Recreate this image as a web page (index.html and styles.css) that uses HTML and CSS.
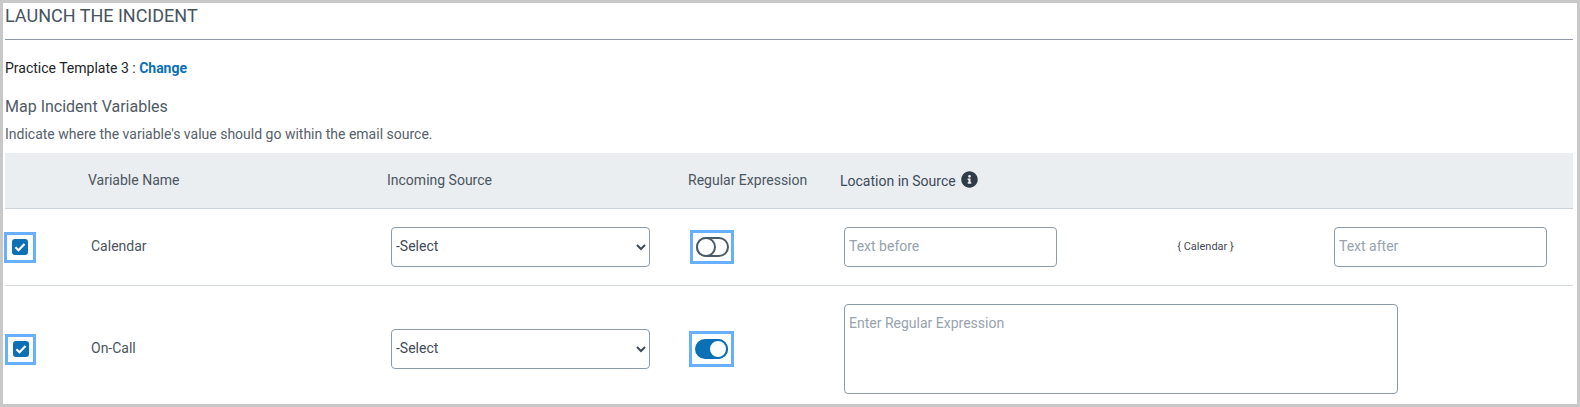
FILE: index.html
```html
<!DOCTYPE html>
<html lang="en">
<head>
<meta charset="utf-8">
<title>Launch the Incident</title>
<link rel="stylesheet" href="styles.css">
</head>
<body>
<main class="frame">
  <h1 class="title">LAUNCH THE INCIDENT</h1>
  <p class="template">Practice Template 3 : <a class="change" href="#">Change</a></p>
  <h2 class="subtitle">Map Incident Variables</h2>
  <p class="hint">Indicate where the variable's value should go within the email source.</p>

  <div class="row head">
    <span class="name">Variable Name</span>
    <span class="source">Incoming Source</span>
    <span class="regex">Regular Expression</span>
    <span class="location">Location in Source
      <svg class="info" viewBox="0 0 512 512" aria-hidden="true"><path d="M256 8C119 8 8 119 8 256s111 248 248 248 248-111 248-248S393 8 256 8zm0 110a42 42 0 1 1 0 84 42 42 0 0 1 0-84zm56 254c0 7-5 12-12 12h-88c-7 0-12-5-12-12v-24c0-7 5-12 12-12h12v-64h-12c-7 0-12-5-12-12v-24c0-7 5-12 12-12h64c7 0 12 5 12 12v100h12c7 0 12 5 12 12z"/></svg>
    </span>
  </div>

  <div class="row first">
    <span class="focus check-focus"><span class="check"><svg viewBox="0 0 16 16"><path d="M3.4 8.2l3.1 3 6-6.2"/></svg></span></span>
    <span class="name cell">Calendar</span>
    <select class="select"><option>-Select</option></select>
    <span class="focus toggle-focus"><span class="toggle"></span></span>
    <input class="field before" placeholder="Text before">
    <span class="token">{ Calendar }</span>
    <input class="field after" placeholder="Text after">
  </div>

  <div class="row second">
    <span class="focus check-focus"><span class="check"><svg viewBox="0 0 16 16"><path d="M3.4 8.2l3.1 3 6-6.2"/></svg></span></span>
    <span class="name cell">On-Call</span>
    <select class="select"><option>-Select</option></select>
    <span class="focus toggle-focus"><span class="toggle on"></span></span>
    <textarea class="field area" placeholder="Enter Regular Expression"></textarea>
  </div>
</main>
</body>
</html>
```
FILE: styles.css
```css
*, *::after { box-sizing: border-box; }
html, body { margin: 0; height: 407px; overflow: hidden; }
body { background: #fff; font-family: Roboto, "Liberation Sans", sans-serif; color: #4a5560; }

.frame {
  width: 1580px;
  height: 407px;
  border: 3px solid #c8c8c8;
  padding: 0 4px 0 2px;
  background: #fff;
}

.title {
  margin: 0;
  height: 37px;
  padding-top: 3px;
  font-size: 18px;
  line-height: 20px;
  font-weight: 400;
  color: #47535f;
  border-bottom: 1px solid #8f99a3;
}

.template {
  margin: 0;
  padding-top: 18px;
  height: 56px;
  font-size: 14px;
  line-height: 20px;
  color: #212529;
}
.change { color: #0b6fb8; font-weight: 700; text-decoration: none; }

.subtitle {
  margin: 0;
  height: 24px;
  font-size: 16px;
  line-height: 22px;
  font-weight: 400;
  color: #4f5b66;
}
.hint {
  margin: 0;
  height: 33px;
  padding-top: 4px;
  font-size: 14px;
  line-height: 20px;
  color: #56616b;
}

.row {
  display: grid;
  align-items: center;
  font-size: 14px;
  color: #4a5560;
}
.head {
  grid-template-columns: 83px 299px 301px 152px 1fr;
  height: 56px;
  background: #ebeef1;
  border-bottom: 1px solid #ced5da;
  padding-bottom: 1px;
}
.head .name { grid-column: 2; }
.head .location { display: flex; align-items: center; gap: 5px; padding-top: 1px; color: #3c4a5c; }
.info { width: 17px; height: 17px; fill: #2f3b47; margin-top: -2px; }

.first, .second {
  grid-template-columns: 86px 300px 298px 153px 219px 273px 1fr;
}
.first { height: 77px; border-bottom: 1px solid #d5dbdf; }
.second { height: 118px; padding-top: 8px; }
.cell { padding-bottom: 2px; }

.focus {
  display: flex;
  align-items: center;
  justify-content: center;
  border: 3px solid #66b0ff;
}
.check-focus { width: 32px; height: 31px; margin-left: -1px; }
.second .check-focus { width: 31px; margin-left: 0; }
.check {
  display: block;
  width: 16px;
  height: 16px;
  border-radius: 3px;
  background: #0b70b5;
}
.check svg { display: block; width: 16px; height: 16px; fill: none; stroke: #fff; stroke-width: 2.2; }

.select {
  width: 259px;
  height: 40px;
  padding: 0 0 2px 0;
  border: 1px solid #8c9ba6;
  border-radius: 4px;
  background: #fff;
  font: 14px Roboto, "Liberation Sans", sans-serif;
  color: #3f4a55;
}

.toggle-focus { width: 44px; height: 34px; margin-left: 1px; }
.second .toggle-focus { width: 45px; height: 36px; margin-left: 0; }
.toggle {
  position: relative;
  display: block;
  width: 33px;
  height: 20px;
  border: 2px solid #4a5a68;
  border-radius: 10px;
  background: #fff;
}
.toggle::after {
  content: "";
  position: absolute;
  left: -2px;
  top: -2px;
  width: 20px;
  height: 20px;
  border: 2px solid #4a5a68;
  border-radius: 50%;
  background: #fff;
}
.toggle.on { background: #0b70b5; border-color: #0b70b5; }
.toggle.on::after { left: 11px; border-color: #0b70b5; }

.field {
  display: block;
  border: 1px solid #8c9ba6;
  border-radius: 4px;
  background: #fff;
  padding: 0 4px 2px;
  font: 14px Roboto, "Liberation Sans", sans-serif;
  color: #3f4a55;
  outline: none;
}
.field::placeholder { color: #97a3ad; opacity: 1; }
.before, .after { width: 213px; height: 40px; }
.before, .area { margin-left: 2px; }
.token { width: 57px; margin-left: 116px; padding-bottom: 2px; font-size: 11px; text-align: center; white-space: nowrap; color: #3f4a55; }
.area { grid-column: 5 / 8; width: 554px; height: 90px; padding-top: 10px; resize: none; line-height: 16px; }
```
